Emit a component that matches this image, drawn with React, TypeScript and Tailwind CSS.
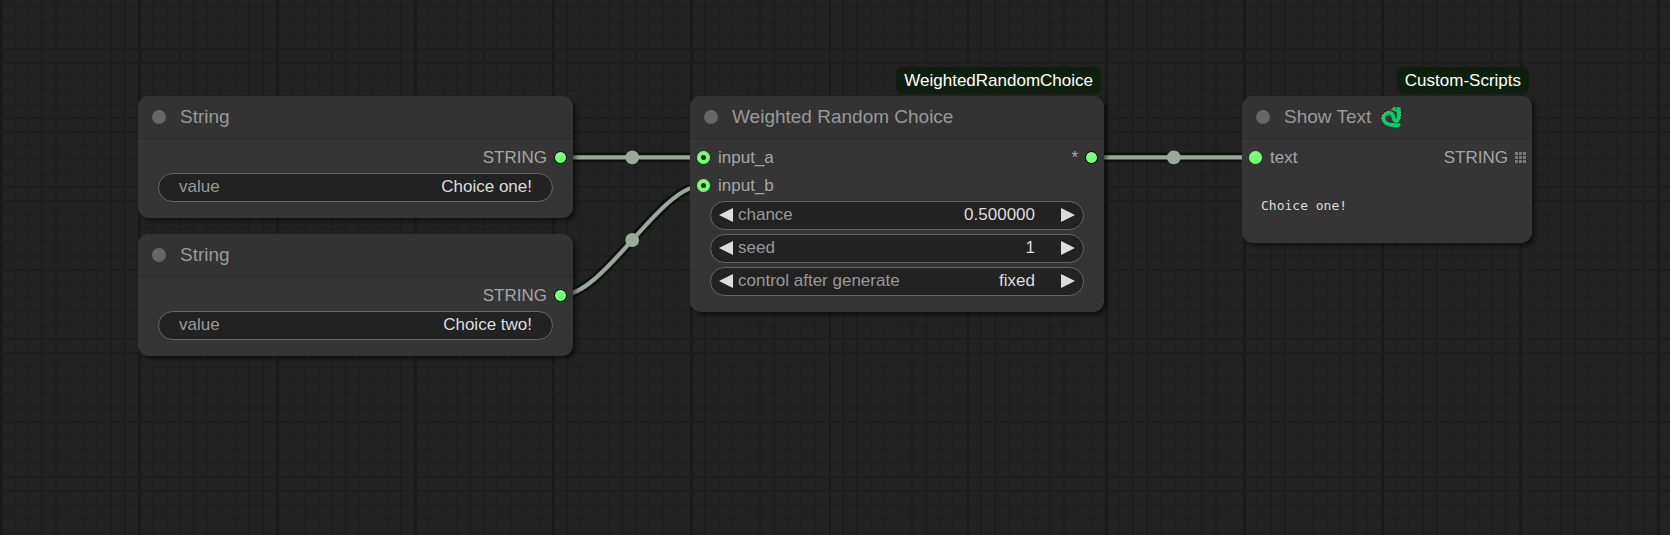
import { useState, type ReactNode } from "react";

const PITCH = 13.81;

/** One grid line as a pixel-snapped start and size. */
function gridLine(origin: number, index: number, half: number) {
  const center = origin + PITCH * index;
  const start = Math.round(center - half);
  return { start, size: Math.round(center + half) - start };
}

function Grid() {
  const columns = Array.from({ length: 200 }, (_, i) => i);
  const rows = Array.from({ length: 120 }, (_, i) => i);
  return (
    <svg className="absolute inset-0 h-full w-full" aria-hidden="true">
      {columns.map((i) => {
        const major = i % 10 === 0;
        const { start, size } = gridLine(major ? 1.3 : 0.6, i, major ? 1.4 : 0.69);
        return <rect key={i} x={start} y="0" width={size} height="100%" fill={major ? "#1a1a1a" : "#1d1d1d"} />;
      })}
      {rows.map((i) => {
        const { start, size } = gridLine(7.58, i, 0.69);
        return <rect key={i} x="0" y={start} width="100%" height={size} fill="#1d1d1d" />;
      })}
    </svg>
  );
}

const links = [
  { d: "M560.5 157.4H704", x: 632.2, y: 157.4 },
  { d: "M560.5 295.3C605.8 295.3 658.7 185 704 185", x: 632.2, y: 240 },
  { d: "M1091.5 157.4H1256", x: 1173.8, y: 157.4 },
];

function Links() {
  return (
    <svg className="absolute inset-0 h-full w-full" fill="none" aria-hidden="true">
      {links.map((link) => (
        <g key={link.d}>
          <path d={link.d} stroke="#000" strokeOpacity="0.5" strokeWidth="9.6" />
          <path d={link.d} stroke="#99aa99" strokeWidth="4.2" />
          <circle cx={link.x} cy={link.y} r="6.9" fill="#99aa99" />
        </g>
      ))}
    </svg>
  );
}

function Snake() {
  return (
    <svg className="h-5 w-5" viewBox="0 0 20 20" fill="none" role="img" aria-label="snake">
      <path
        d="M17.4 3.6C17.9 7 18 11 16.8 13C15.2 15 13.2 14 12.6 10.8C12 7.4 10.8 5.6 8 5.9C4.6 6.4 2.4 9 2.5 11.6C2.8 15.8 7.4 18 13 18"
        stroke="#06cf6b"
        strokeWidth="3.7"
      />
      <path d="M9 16.2H15L19.2 16.4L19.6 18.4L18 19.9H12C10 19.8 8.6 19.2 8 18Z" fill="#06cf6b" />
      <path d="M11 1.4L12.4 .3H19.2L19.6 1.2V5.4L15.4 4.8L11.2 3.4Z" fill="#06cf6b" />
      <path d="M9 2.6L11.8 3M9.8 4L10.6 3" stroke="#e02a2a" strokeWidth="1" />
      <circle cx="15" cy="2" r="0.8" fill="#14462b" />
      <g fill="#d8d44a">
        <circle cx="19.2" cy="5.6" r="0.6" />
        <circle cx="19.3" cy="8.4" r="0.6" />
        <circle cx="19" cy="11.2" r="0.6" />
        <circle cx="6.8" cy="4.7" r="0.6" />
        <circle cx="3.8" cy="6" r="0.6" />
        <circle cx="1.6" cy="8.6" r="0.6" />
        <circle cx="1" cy="11.4" r="0.6" />
      </g>
    </svg>
  );
}

function Node({
  title,
  icon,
  badge,
  place,
  children,
}: {
  title: string;
  icon?: ReactNode;
  badge?: string;
  place: string;
  children: ReactNode;
}) {
  return (
    <section
      className={`absolute rounded-[11px] bg-[#353535] pb-4 shadow-[3px_3px_4px_rgba(0,0,0,0.5)] ${place}`}
    >
      {badge && (
        <span className="absolute right-[3px] bottom-full mb-0.5 rounded-[7px] bg-[#0f1f0f] px-2 text-[17px] leading-[27px] whitespace-nowrap text-white">
          {badge}
        </span>
      )}
      <header className="flex h-[43px] items-center gap-3.5 rounded-t-[11px] border-b border-[#2b2b2b] bg-[#333333] pl-3.5">
        <span className="size-3.5 rounded-full bg-[#666666]" />
        <h2 className="flex items-center gap-2.5 text-[19px] leading-6 whitespace-pre text-[#999999]">
          {title}
          {icon}
        </h2>
      </header>
      <div className="pt-1">{children}</div>
    </section>
  );
}

function SlotRow({ input, output }: { input?: ReactNode; output?: ReactNode }) {
  return (
    <div className="flex h-7 items-center justify-between pr-1.5 pl-[7px] text-[17px] leading-6 text-[#a6a6a6]">
      <div className="flex items-center gap-2">{input}</div>
      <div className="flex items-center gap-[7px]">{output}</div>
    </div>
  );
}

function Label({ children }: { children: ReactNode }) {
  return <span className="pt-0.5">{children}</span>;
}

function OutputDot() {
  return <span className="size-[13px] rounded-full border border-black bg-[#77ff77]" />;
}

function RingDot() {
  return <span className="size-[13px] rounded-full border-4 border-[#77ff77] bg-[#222222]" />;
}

function GridDot() {
  return (
    <svg className="size-[11px]" viewBox="0 0 11 11" fill="#777788" aria-hidden="true">
      {[0, 4, 8].map((y) => [0, 4, 8].map((x) => <rect key={`${x}-${y}`} x={x} y={y} width="3" height="3" />))}
    </svg>
  );
}

const pill =
  "mx-5 flex h-[29px] items-center rounded-full border border-[#666666] bg-[#222222] pb-0.5 text-[17px] leading-6";
const field = "w-0 min-w-0 flex-1 appearance-none bg-transparent text-right text-[#dddddd] outline-none";

function StringNode({ id, value, place }: { id: string; value: string; place: string }) {
  const [text, setText] = useState(value);
  return (
    <Node title="String" place={place}>
      <SlotRow output={<><Label>STRING</Label><OutputDot /></>} />
      <div className={`${pill} mt-0.5 px-5`}>
        <label htmlFor={id} className="text-[#999999]">value</label>
        <input id={id} type="text" value={text} onChange={(e) => setText(e.target.value)} className={field} />
      </div>
    </Node>
  );
}

function Arrow({ label, d, onClick }: { label: string; d: string; onClick: () => void }) {
  return (
    <button type="button" aria-label={label} onClick={onClick} className="shrink-0">
      <svg className="size-3.5" viewBox="0 0 14 14" fill="#dddddd" aria-hidden="true">
        <path d={d} />
      </svg>
    </button>
  );
}

function Stepper({
  id,
  label,
  onStep,
  children,
}: {
  id: string;
  label: string;
  onStep: (direction: number) => void;
  children: ReactNode;
}) {
  return (
    <div className={`${pill} px-2`}>
      <Arrow label={`Decrease ${label}`} d="M14 0V14L0 7Z" onClick={() => onStep(-1)} />
      <label htmlFor={id} className="pl-[5px] whitespace-nowrap text-[#999999]">{label}</label>
      <div className="flex flex-1 pr-[26px]">{children}</div>
      <Arrow label={`Increase ${label}`} d="M0 0V14L14 7Z" onClick={() => onStep(1)} />
    </div>
  );
}

const modes = ["fixed", "increment", "decrement", "randomize"];

function ChoiceNode() {
  const [chance, setChance] = useState("0.500000");
  const [seed, setSeed] = useState("1");
  const [mode, setMode] = useState("fixed");
  return (
    <Node title="Weighted Random Choice" badge="WeightedRandomChoice" place="left-[690px] top-24 w-[414px]">
      <SlotRow input={<><RingDot /><Label>input_a</Label></>} output={<><Label>*</Label><OutputDot /></>} />
      <SlotRow input={<><RingDot /><Label>input_b</Label></>} />
      <div className="mt-0.5 flex flex-col gap-1">
        <Stepper id="chance" label="chance" onStep={(n) => setChance((Number(chance) + n * 0.01).toFixed(6))}>
          <input id="chance" inputMode="decimal" value={chance} onChange={(e) => setChance(e.target.value)} className={field} />
        </Stepper>
        <Stepper id="seed" label="seed" onStep={(n) => setSeed(String(Number(seed) + n))}>
          <input id="seed" inputMode="numeric" value={seed} onChange={(e) => setSeed(e.target.value)} className={field} />
        </Stepper>
        <Stepper
          id="mode"
          label="control after generate"
          onStep={(n) => setMode(modes[(modes.indexOf(mode) + n + modes.length) % modes.length])}
        >
          <select id="mode" value={mode} onChange={(e) => setMode(e.target.value)} className={field}>
            {modes.map((m) => <option key={m}>{m}</option>)}
          </select>
        </Stepper>
      </div>
    </Node>
  );
}

function ShowTextNode() {
  return (
    <Node title="Show Text" icon={<Snake />} badge="Custom-Scripts" place="left-[1242px] top-24 w-[290px]">
      <SlotRow
        input={<><span className="size-[13px] rounded-full bg-[#77ff77]" /><Label>text</Label></>}
        output={<><Label>STRING</Label><GridDot /></>}
      />
      <textarea
        readOnly
        aria-label="Shown text"
        defaultValue="Choice one!"
        className="mt-[25px] block h-[31px] w-full resize-none overflow-hidden bg-transparent px-[19px] font-['DejaVu_Sans_Mono',monospace] text-[13px] leading-5 text-[#dddddd] outline-none"
      />
    </Node>
  );
}

export default function App() {
  return (
    <main className="relative min-h-screen w-full overflow-hidden bg-[#222222] font-['Liberation_Sans',Arial,sans-serif]">
      <Grid />
      <Links />
      <StringNode id="first" value="Choice one!" place="left-[138px] top-24 w-[435px]" />
      <StringNode id="second" value="Choice two!" place="left-[138px] top-[234px] w-[435px]" />
      <ChoiceNode />
      <ShowTextNode />
    </main>
  );
}
